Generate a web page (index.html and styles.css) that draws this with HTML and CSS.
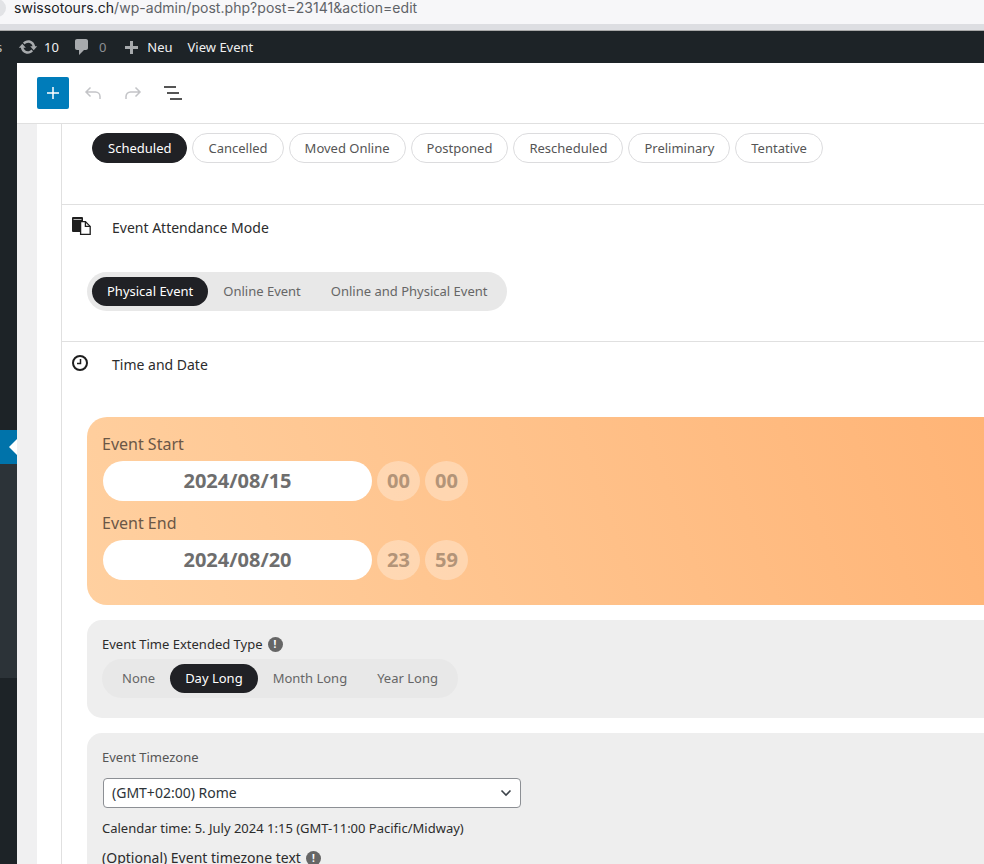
FILE: index.html
```html
<!DOCTYPE html>
<html lang="en">
<head>
    <meta charset="UTF-8">
    <title>Edit Event</title>
    <link rel="stylesheet" href="styles.css">
</head>
<body>

<div class="urlbar">
    <div class="url-site"></div>
    <div class="url-text"><span class="url-host">swissotours.ch</span>/wp-admin/post.php?post=23141&amp;action=edit</div>
</div>
<div class="browser-line"></div>

<div class="adminbar">
    <span class="bar-cut">s</span>
    <span class="bar-item">
        <svg class="bar-icon" width="20" height="20" viewBox="0 0 20 20"><path fill="#a7aaad" d="M10.2 3.280c3.530 0 6.430 2.610 6.920 6h2.080l-3.500 4-3.500-4h2.320c-.45-1.970-2.210-3.450-4.320-3.450-1.450 0-2.730.71-3.540 1.780L4.950 5.660C6.230 4.200 8.110 3.280 10.200 3.280zm-.4 13.440c-3.520 0-6.430-2.610-6.920-6H.8l3.500-4c1.170 1.330 2.330 2.670 3.500 4H5.480c.45 1.970 2.210 3.450 4.320 3.450 1.450 0 2.730-.71 3.540-1.780l1.710 1.950c-1.280 1.460-3.150 2.380-5.250 2.380z"/></svg>
        <span class="bar-text">10</span>
    </span>
    <span class="bar-item bar-comments">
        <svg class="bar-icon" width="20" height="20" viewBox="0 0 20 20"><path fill="#a7aaad" d="M5 2h9c1.100 0 2 .9 2 2v7c0 1.100-.9 2-2 2h-2l-5 5v-5H5c-1.100 0-2-.9-2-2V4c0-1.100.9-2 2-2z"/></svg>
        <span class="bar-muted">0</span>
    </span>
    <span class="bar-item bar-new">
        <svg class="bar-icon" width="20" height="20" viewBox="0 0 20 20"><path fill="#a7aaad" d="M9 4h3v5h5v3h-5v5H9v-5H4V9h5z"/></svg>
        <span class="bar-text">Neu</span>
    </span>
    <span class="bar-text bar-view">View Event</span>
</div>

<div class="wp-wrap">
    <div class="sidebar">
        <div class="side-top"></div>
        <div class="side-active"><span class="side-arrow"></span></div>
        <div class="side-sub"></div>
        <div class="side-rest"></div>
    </div>
    <div class="editor">
        <div class="toolbar">
            <button class="tool-add">
                <svg width="16" height="16" viewBox="0 0 16 16"><path fill="#fff" d="M7.250 2h1.500v5.250H14v1.500H8.750V14h-1.500V8.750H2v-1.500h5.250z"/></svg>
            </button>
            <svg class="tool-icon tool-undo" width="24" height="24" viewBox="0 0 24 24"><path fill="none" stroke="#c3c4c7" stroke-width="1.500" d="M9.500 6.500 5 11l4.500 4.500M5 11h9.500a4.500 4.500 0 0 1 4.500 4.500V18"/></svg>
            <svg class="tool-icon tool-redo" width="24" height="24" viewBox="0 0 24 24"><path fill="none" stroke="#c3c4c7" stroke-width="1.500" d="M14.500 6.500 19 11l-4.500 4.500M19 11H9.500A4.500 4.500 0 0 0 5 15.500V18"/></svg>
            <svg class="tool-icon tool-list" width="24" height="24" viewBox="0 0 24 24"><path fill="none" stroke="#1e1e1e" stroke-width="1.500" d="M3 6h12M6 12h12M9 18h12"/></svg>
        </div>

        <div class="editor-body">
            <div class="gutter"></div>
            <div class="panel">

                <div class="section section-status">
                    <div class="chips">
                        <span class="chip chip-on">Scheduled</span>
                        <span class="chip">Cancelled</span>
                        <span class="chip">Moved Online</span>
                        <span class="chip">Postponed</span>
                        <span class="chip">Rescheduled</span>
                        <span class="chip">Preliminary</span>
                        <span class="chip">Tentative</span>
                    </div>
                </div>

                <div class="section section-mode">
                    <div class="section-head">
                        <svg class="head-icon" width="19" height="18" viewBox="0 0 19 18">
                            <rect x="0" y="0" width="11" height="15" rx="1" fill="#1e1e1e"/>
                            <path fill="none" stroke="#fff" stroke-width=".7" d="M1.500 2.500h8"/>
                            <path fill="#fff" stroke="#1e1e1e" stroke-width="1.300" d="M8.600 4.600h4.800l4.800 4.800v7.900H8.600z"/>
                            <path fill="none" stroke="#1e1e1e" stroke-width="1.300" d="M13.400 4.600v4.800h4.800"/>
                        </svg>
                        <span class="head-title">Event Attendance Mode</span>
                    </div>
                    <div class="pills pills-mode">
                        <span class="pill pill-on">Physical Event</span>
                        <span class="pill">Online Event</span>
                        <span class="pill">Online and Physical Event</span>
                    </div>
                </div>

                <div class="section section-time">
                    <div class="section-head">
                        <svg class="head-icon head-clock" width="16" height="16" viewBox="0 0 16 16"><circle cx="8" cy="8" r="7" fill="none" stroke="#1e1e1e" stroke-width="2"/><path fill="none" stroke="#1e1e1e" stroke-width="1.500" d="M8.500 4v4.500H5"/></svg>
                        <span class="head-title">Time and Date</span>
                    </div>

                    <div class="date-box">
                        <div class="date-label">Event Start</div>
                        <div class="date-row">
                            <span class="date-field">2024/08/15</span>
                            <span class="date-time">00</span>
                            <span class="date-time">00</span>
                        </div>
                        <div class="date-label">Event End</div>
                        <div class="date-row">
                            <span class="date-field">2024/08/20</span>
                            <span class="date-time">23</span>
                            <span class="date-time">59</span>
                        </div>
                    </div>

                    <div class="gray-box box-extended">
                        <div class="box-label">Event Time Extended Type <span class="info">!</span></div>
                        <div class="pills pills-extended">
                            <span class="pill">None</span>
                            <span class="pill pill-on">Day Long</span>
                            <span class="pill">Month Long</span>
                            <span class="pill">Year Long</span>
                        </div>
                    </div>

                    <div class="gray-box box-zone">
                        <div class="zone-label">Event Timezone</div>
                        <div class="zone-select">
                            <span>(GMT+02:00) Rome</span>
                            <svg width="12" height="8" viewBox="0 0 12 8"><path fill="none" stroke="#3c434a" stroke-width="1.600" d="M1.500 1.500 6 6l4.500-4.500"/></svg>
                        </div>
                        <div class="zone-note">Calendar time: 5. July 2024 1:15 (GMT-11:00 Pacific/Midway)</div>
                        <div class="zone-optional">(Optional) Event timezone text <span class="info">!</span></div>
                    </div>
                </div>

            </div>
        </div>
    </div>
</div>

</body>
</html>
```

FILE: styles.css
```css
html, body {
    margin: 0;
    padding: 0;
    height: 864px;
    overflow: hidden;
    background: #fff;
    font-family: "Noto Sans", sans-serif;
    color: #1e1e1e;
}

/* browser chrome */
.urlbar {
    height: 24px;
    background: #f7f7f9;
    display: flex;
    overflow: hidden;
}

.url-site {
    width: 18px;
    height: 18px;
    margin: -1px 8px 0 -12px;
    border-radius: 50%;
    background: #e2e3e6;
    flex-shrink: 0;
}

.url-text {
    font-family: "Inter", sans-serif;
    font-size: 14px;
    letter-spacing: .04px;
    line-height: 15px;
    color: #5f6368;
    white-space: nowrap;
}

.url-host {
    color: #202124;
}

.browser-line {
    height: 7px;
    background: #dddee2;
    border-bottom: 1px solid #a9a9a9;
    box-sizing: border-box;
}

/* wp admin bar */
.adminbar {
    height: 32px;
    background: #1d2327;
    display: flex;
    align-items: center;
    font-size: 13px;
    color: #f0f0f1;
    overflow: hidden;
}

.bar-cut {
    width: 22px;
    margin-left: -4px;
    color: #c3c4c7;
}

.bar-item {
    display: flex;
    align-items: center;
}

.bar-icon {
    margin-right: 6px;
}

.bar-comments {
    margin-left: 13px;
}

.bar-muted {
    color: #8c8f94;
    margin-left: 1px;
}

.bar-new {
    margin-left: 15px;
}

.bar-view {
    margin-left: 15px;
}

.wp-wrap {
    display: flex;
    height: 801px;
}

.sidebar {
    width: 17px;
    flex-shrink: 0;
    display: flex;
    flex-direction: column;
    background: #1d2327;
}

.side-top {
    height: 367px;
}

.side-active {
    height: 34px;
    background: #0073aa;
    display: flex;
    justify-content: flex-end;
    align-items: center;
}

.side-arrow {
    width: 0;
    height: 0;
    border: 8px solid transparent;
    border-left-width: 0;
    border-right-color: #fff;
}

.side-sub {
    height: 214px;
    background: #2c3338;
}

.side-rest {
    flex: 1;
}

/* editor */
.editor {
    flex: 1;
    min-width: 0;
    display: flex;
    flex-direction: column;
}

.toolbar {
    height: 60px;
    flex-shrink: 0;
    display: flex;
    align-items: center;
    padding-left: 20px;
    border-bottom: 1px solid #e0e0e0;
}

.tool-add {
    width: 32px;
    height: 32px;
    padding: 0;
    border: 0;
    border-radius: 2px;
    background: #007cba;
    display: flex;
    align-items: center;
    justify-content: center;
}

.tool-undo {
    margin-left: 12px;
}

.tool-redo {
    margin-left: 16px;
}

.tool-list {
    margin-left: 16px;
}

.editor-body {
    flex: 1;
    display: flex;
    min-height: 0;
}

.gutter {
    width: 20px;
    background: #f0f0f1;
    flex-shrink: 0;
}

.panel {
    flex: 1;
    min-width: 0;
    margin-left: 24px;
    border-left: 1px solid #e0e0e0;
}

.section {
    border-bottom: 1px solid #e0e0e0;
    box-sizing: border-box;
}

.section-status {
    height: 81px;
    padding: 9px 0 0 30px;
}

.chips {
    display: flex;
    gap: 5px;
}

.chip {
    height: 30px;
    line-height: 28px;
    box-sizing: border-box;
    padding: 0 15px;
    border: 1px solid #dcdcde;
    border-radius: 15px;
    font-size: 13px;
    color: #555;
    white-space: nowrap;
}

.chip-on {
    background: #202125;
    border-color: #202125;
    color: #fff;
}

.section-mode {
    height: 137px;
}

.section-head {
    display: flex;
    align-items: flex-start;
    gap: 21px;
    height: 46px;
    padding-left: 10px;
}

.head-icon {
    margin-top: 12px;
}

.head-clock {
    margin-top: 13px;
    margin-right: 3px;
}

.head-title {
    font-size: 14px;
    line-height: 20px;
    margin-top: 13px;
    color: #2c2c2c;
}

.pills {
    display: inline-flex;
    align-items: center;
    height: 39px;
    padding: 0 5px;
    border-radius: 20px;
    background: #e8e8e8;
    box-sizing: border-box;
}

.pills-mode {
    margin: 21px 0 0 25px;
}

.pill {
    height: 29px;
    line-height: 29px;
    padding: 0 15px;
    border-radius: 15px;
    font-size: 13px;
    color: #666;
    white-space: nowrap;
}

.pill-on {
    background: #202125;
    color: #fff;
}

.section-time {
    border-bottom: 0;
}

.date-box {
    margin: 29px 0 15px 25px;
    height: 188px;
    box-sizing: border-box;
    padding: 15px 15px 0;
    border-radius: 20px 0 0 20px;
    background: linear-gradient(70deg, #ffd0a0 0%, #ffb476 100%);
}

.date-label {
    font-size: 16px;
    line-height: 24px;
    color: #6b5747;
}

.date-row {
    display: flex;
    gap: 5px;
    margin-top: 5px;
    margin-bottom: 10px;
}

.date-field {
    width: 269px;
    height: 40px;
    line-height: 40px;
    margin-left: 1px;
    border-radius: 20px;
    background: #fff;
    text-align: center;
    font-size: 20px;
    font-weight: 700;
    color: #6e6e6e;
}

.date-time {
    width: 43px;
    height: 40px;
    line-height: 40px;
    border-radius: 50%;
    background: rgba(255, 255, 255, .3);
    text-align: center;
    font-size: 20px;
    font-weight: 700;
    color: #b39478;
}

.gray-box {
    margin-left: 25px;
    padding: 15px 15px 0;
    border-radius: 15px 0 0 15px;
    background: #eee;
    box-sizing: border-box;
}

.box-extended {
    height: 98px;
    margin-bottom: 15px;
}

.box-label {
    font-size: 13px;
    line-height: 18px;
    color: #2c2c2c;
    display: flex;
    align-items: center;
    gap: 5px;
}

.info {
    width: 15px;
    height: 15px;
    border-radius: 50%;
    background: #666;
    color: #fff;
    font-size: 10px;
    font-weight: 700;
    line-height: 15px;
    text-align: center;
    display: inline-block;
}

.pills-extended {
    margin-top: 6px;
}

.box-zone {
    height: 200px;
}

.zone-label {
    font-size: 13px;
    line-height: 18px;
    color: #555;
}

.zone-select {
    width: 418px;
    height: 30px;
    margin: 12px 0 0 1px;
    box-sizing: border-box;
    padding: 0 8px 1px;
    border: 1px solid #8c8f94;
    border-radius: 4px;
    background: #fff;
    display: flex;
    align-items: center;
    justify-content: space-between;
    font-size: 14px;
    color: #2c3338;
}

.zone-note {
    font-size: 13px;
    line-height: 18px;
    margin-top: 11px;
    color: #2c2c2c;
}

.zone-optional {
    font-size: 14px;
    line-height: 20px;
    margin-top: 11px;
    color: #2c2c2c;
    display: flex;
    align-items: center;
    gap: 5px;
}
```
